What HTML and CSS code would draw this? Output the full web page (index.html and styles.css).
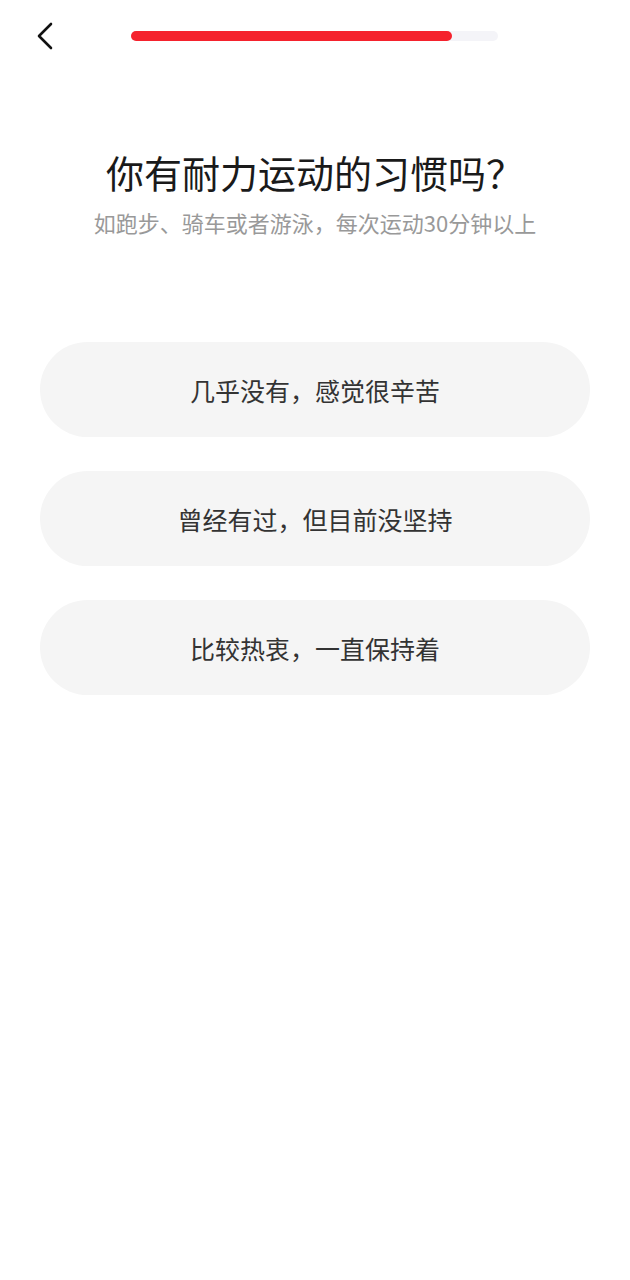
FILE: index.html
```html
<!DOCTYPE html>
<html lang="zh-CN">
<head>
  <meta charset="UTF-8" />
  <meta name="viewport" content="width=device-width, initial-scale=1.0"/>
  <title>问卷</title>
  <link rel="stylesheet" href="styles.css">
</head>
<body>
  <div class="header">
    <span class="back">
      <svg width="20" height="30" viewBox="0 0 20 30">
        <path d="M16 3 L4 15 L16 27" fill="none" stroke="#111" stroke-width="2.6" stroke-linecap="round" stroke-linejoin="round"/>
      </svg>
    </span>
    <div class="progress">
      <div class="progress-fill" style="width: 87.5%"></div>
    </div>
  </div>

  <div class="question">
    <h1 class="title">你有耐力运动的习惯吗？</h1>
    <p class="subtitle">如跑步、骑车或者游泳，每次运动30分钟以上</p>
  </div>

  <div class="options">
    <div class="option">几乎没有，感觉很辛苦</div>
    <div class="option">曾经有过，但目前没坚持</div>
    <div class="option">比较热衷，一直保持着</div>
  </div>
</body>
</html>
```

FILE: styles.css
```css
body {
  margin: 0;
  background: #fff;
  color: #222;
  font-family: "Noto Sans CJK SC", "Noto Sans", sans-serif;
}

.header {
  display: flex;
  align-items: center;
  height: 72px;
  padding-left: 35px;
}

.back {
  display: flex;
  width: 20px;
  height: 30px;
}

.progress {
  margin-left: 76px;
  width: 367px;
  height: 10px;
  background: #f4f4f8;
  border-radius: 5px;
}

.progress-fill {
  height: 100%;
  background: #f5222d;
  border-radius: 5px;
}

.question {
  text-align: center;
  padding-top: 72px;
}

.title {
  margin: 0;
  font-size: 38px;
  font-weight: 400;
  line-height: 56px;
  color: #1a1a1a;
}

.subtitle {
  margin: 2px 0 0;
  font-size: 22px;
  line-height: 40px;
  color: #999;
}

.options {
  display: flex;
  flex-direction: column;
  gap: 34px;
  padding: 100px 40px 0;
}

.option {
  height: 95px;
  border-radius: 48px;
  background: #f5f5f5;
  display: flex;
  align-items: center;
  justify-content: center;
  font-size: 25px;
  color: #333;
}
```
